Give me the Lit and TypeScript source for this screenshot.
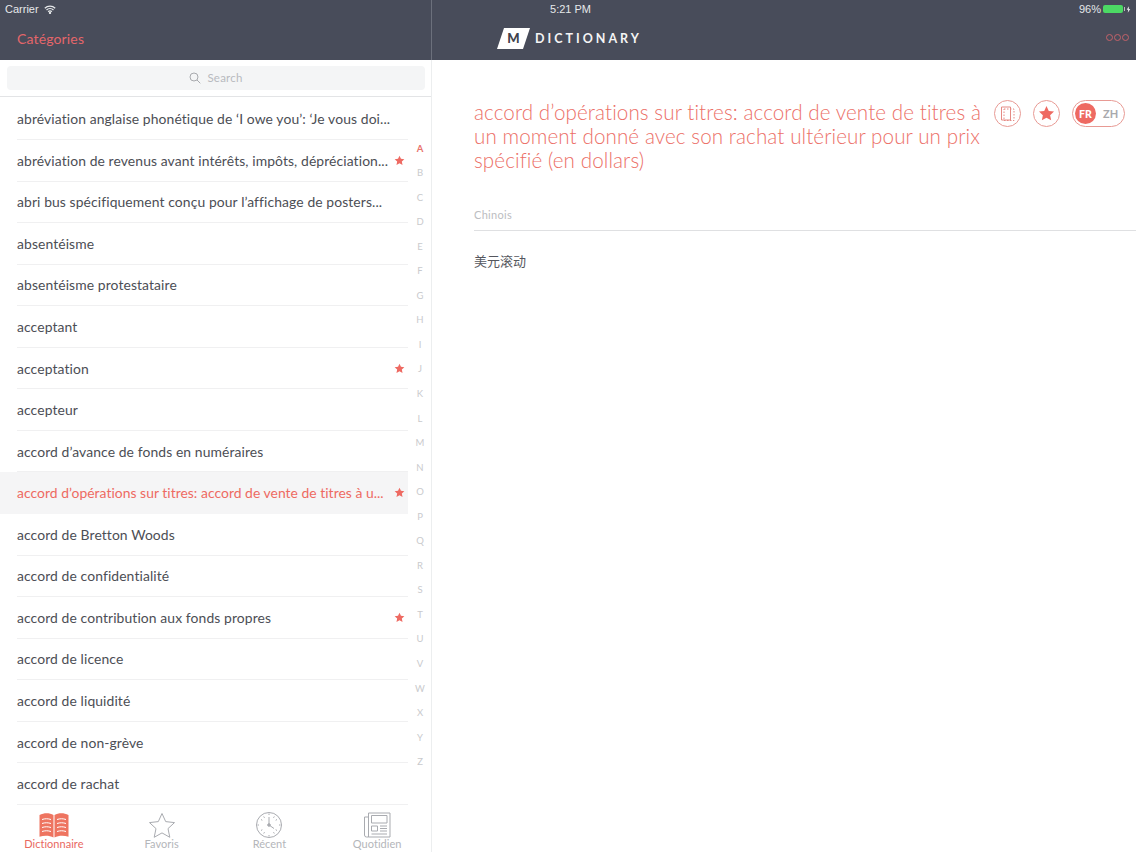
import { LitElement, html, css, svg } from "lit";
import { customElement } from "lit/decorators.js";

const rows: [string, boolean, boolean?][] = [
  ["abréviation anglaise phonétique de ‘I owe you’: ‘Je vous doi...", false],
  ["abréviation de revenus avant intérêts, impôts, dépréciation...", true],
  ["abri bus spécifiquement conçu pour l’affichage de posters...", false],
  ["absentéisme", false],
  ["absentéisme protestataire", false],
  ["acceptant", false],
  ["acceptation", true],
  ["accepteur", false],
  ["accord d’avance de fonds en numéraires", false],
  ["accord d’opérations sur titres: accord de vente de titres à u...", true, true],
  ["accord de Bretton Woods", false],
  ["accord de confidentialité", false],
  ["accord de contribution aux fonds propres", true],
  ["accord de licence", false],
  ["accord de liquidité", false],
  ["accord de non-grève", false],
  ["accord de rachat", false],
];

const star = svg`<path d="M12 1.500l3.200 6.800 7.400.9-5.500 5.100 1.500 7.300-6.600-3.700-6.600 3.700 1.500-7.300L1.400 9.200l7.400-.9z"/>`;

@customElement("app-root")
export class AppRoot extends LitElement {
  static styles = css`
    :host { display: block; width: 1136px; height: 852px; overflow: hidden; background: #fff;
      font-family: Lato, "Noto Sans CJK SC", sans-serif; color: #4a4d57; }
    .app { display: grid; grid-template-columns: 432px 1fr; height: 852px; position: relative; }
    .status { position: absolute; left: 0; right: 0; top: 0; height: 18px; display: grid; grid-template-columns: 1fr auto 1fr;
      align-items: center; color: #e6e8ea; font-size: 11px; padding: 0 5px 0 5px; z-index: 2; font-family: "Liberation Sans", sans-serif; }
    .st-l { display: flex; align-items: center; gap: 5px; }
    .st-r { display: flex; align-items: center; justify-content: flex-end; gap: 2px; }
    .time { font-size: 11px; margin-left: 5px; }
    .batt { width: 20px; height: 8px; background: #4cd964; border-radius: 2px; position: relative; }
    .batt::after { content: ""; position: absolute; right: -2px; top: 2px; width: 1px; height: 4px; background: #bbb; }
    .bolt { margin-left: 1px; }
    .left { display: flex; flex-direction: column; height: 852px; border-right: 1px solid #eceeef; box-sizing: content-box; min-width: 0; }
    .bar { height: 60px; background: #484c5a; flex: none; box-sizing: border-box; }
    .lbar { padding: 30px 0 0 17px; color: #e4666a; font-size: 14px; line-height: 17px; letter-spacing: .15px; border-right: 1px solid #6c707c; margin-right: -1px; }
    .search-wrap { height: 37px; box-sizing: border-box; padding: 6px 6px 6px 7px; border-bottom: 1px solid #e3e4e6; flex: none; }
    .search { height: 24px; background: #f4f5f6; border-radius: 4px; display: flex; align-items: center; justify-content: center; gap: 6px;
      color: #b8babf; font-size: 11.5px; letter-spacing: .2px; }
    .search span { margin-bottom: 1px; }
    .body { flex: 1; display: grid; grid-template-columns: 408px 1fr; min-height: 0; }
    .list { display: flex; flex-direction: column; padding-top: 1.4px; }
    .row { height: 41.57px; box-sizing: border-box; display: flex; align-items: center; margin-left: 17px; border-bottom: 1px solid #f0f0f1;
      font-size: 13.9px; color: #4c4e55; justify-content: space-between; white-space: nowrap; letter-spacing: .1px; }
    .row.sel { margin-left: 0; padding-left: 17px; background: #f5f5f6; color: #ee6a62; border-bottom-color: #f5f5f6; letter-spacing: .03px; }
    .row svg { width: 11px; height: 11px; fill: #ee6a62; margin-right: 3.500px; flex: none; }
    .index { display: flex; flex-direction: column; align-items: center; padding-top: 39.500px; }
    .index span { height: 24.560px; line-height: 24.560px; font-size: 9.500px; color: #c9cacd; width: 24px; text-align: center; }
    .index span.on { color: #e8736d; font-weight: 700; }
    .tabs { height: 47px; flex: none; display: grid; grid-template-columns: repeat(4, 1fr); margin-top: -1px; width: 431px; }
    .tab { display: flex; flex-direction: column; align-items: center; color: #b4b6ba; font-size: 11px; line-height: 12px; padding-top: 7px; letter-spacing: .03px; }
    .tab svg { width: 32px; height: 26px; display: block; }
    .tab.on { color: #e9685f; }
    .right { display: flex; flex-direction: column; min-width: 0; }
    .rbar { display: flex; align-items: flex-start; justify-content: space-between; padding: 28px 7px 0 65px; }
    .logo { display: flex; align-items: center; gap: 5px; color: #f4f4f5; font-weight: 700; font-size: 12.500px; letter-spacing: 3px; line-height: 21px; }
    .mark { width: 33px; height: 21px; position: relative; display: flex; align-items: center; justify-content: center; color: #3f424c; font-size: 13px; letter-spacing: 0; }
    .mark svg { position: absolute; inset: 0; }
    .mark b { position: relative; font-weight: 900; }
    .dots { display: flex; gap: 1px; padding-top: 6px; }
    .dots i { width: 5px; height: 5px; border: 1px solid #c4626a; border-radius: 50%; box-sizing: content-box; display: block; }
    .head { display: flex; padding: 40px 11px 0 42px; justify-content: space-between; align-items: flex-start; }
    .title { width: 515px; color: #ec6f67; font-size: 20.600px; line-height: 24px; letter-spacing: .1px; font-weight: 300; margin: 0; }
    .actions { display: flex; align-items: center; gap: 12px; }
    .circle { width: 27px; height: 27px; border: 1px solid #e89a94; border-radius: 50%; box-sizing: border-box; display: flex; align-items: center; justify-content: center; }
    .toggle { width: 53px; height: 27px; border: 1px solid #e89a94; border-radius: 14px; box-sizing: border-box; display: flex; align-items: center; padding-left: 2px; gap: 7px; font-size: 11px; font-weight: 700; color: #a8a9ad; }
    .toggle b { width: 21px; height: 21px; border-radius: 50%; background: #ee6a62; color: #fff; display: flex; align-items: center; justify-content: center; font-size: 10.500px; }
    .label { margin: 36px 0 0 42px; height: 23px; border-bottom: 1px solid #dfe0e2; color: #bcbdc1; font-size: 11px; line-height: 14px; letter-spacing: .3px; box-sizing: border-box; }
    .zh { margin: 20px 0 0 42px; font-size: 13px; line-height: 20px; color: #55575e; font-family: "Noto Sans CJK SC", sans-serif; font-weight: 400; }
  `;

  render() {
    return html`<div class="app">
      <div class="status">
        <div class="st-l"><span>Carrier</span>
          <svg width="12" height="9" viewBox="0 0 12 9" fill="none" stroke="#e6e8ea" stroke-width="1.300"><path d="M.8 3.200a7.600 7.600 0 0 1 10.400 0M2.500 5a5 5 0 0 1 7 0M4.200 6.700a2.500 2.500 0 0 1 3.600 0"/><circle cx="6" cy="8" r=".5" fill="#e6e8ea"/></svg>
        </div>
        <div class="time">5:21 PM</div>
        <div class="st-r"><span>96%</span><div class="batt"></div>
          <svg class="bolt" width="5" height="9" viewBox="0 0 7 9" fill="#e6e8ea"><path d="M4 0 1 5h2L2.500 9 6 3.800H4z"/></svg>
        </div>
      </div>

      <section class="left">
        <div class="bar lbar">Catégories</div>
        <div class="search-wrap"><div class="search">
          <svg width="12" height="12" viewBox="0 0 12 12" fill="none" stroke="#a8aaae" stroke-width="1"><circle cx="5" cy="5" r="4"/><path d="M8 8l3.300 3.300"/></svg>
          <span>Search</span></div></div>
        <div class="body">
          <div class="list">
            ${rows.map(([t, s, sel]) => html`<div class="row ${sel ? "sel" : ""}"><span>${t}</span>${s ? html`<svg viewBox="0 0 24 24">${star}</svg>` : ""}</div>`)}
          </div>
          <div class="index">
            ${"ABCDEFGHIJKLMNOPQRSTUVWXYZ".split("").map((c) => html`<span class="${c === "A" ? "on" : ""}">${c}</span>`)}
          </div>
        </div>
        <nav class="tabs">
          <div class="tab on">
            <svg viewBox="0 0 32 26"><path fill="#ee7460" d="M1.500 3c4.500-2.500 10-2.500 14 0v22.500c-4-2.200-9.500-2.200-14-.7zM16.500 3c4-2.500 9.500-2.500 14 0v21.800c-4.500-1.500-10-1.500-14 .7z"/><path fill="none" stroke="#fff" stroke-width="1" d="M4 7.500c3-1 6-1 9 0M4 11.500c3-1 6-1 9 0M4 15.500c3-1 6-1 9 0M4 19.500c3-1 6-1 9 0M19 7.500c3-1 6-1 9 0M19 11.500c3-1 6-1 9 0M19 15.500c3-1 6-1 9 0M19 19.500c3-1 6-1 9 0"/></svg>
            Dictionnaire</div>
          <div class="tab">
            <svg viewBox="0 0 32 26"><path fill="none" stroke="#a9abb0" stroke-width="1" d="M16 1.500l3.700 8.100 8.800 1-6.500 6 1.800 8.700-7.800-4.400-7.800 4.400 1.800-8.700-6.500-6 8.800-1z"/></svg>
            Favoris</div>
          <div class="tab">
            <svg viewBox="0 0 32 26" fill="none" stroke="#a9abb0" stroke-width="1"><circle cx="16" cy="13" r="12.500"/><path d="M16 5v8M16 13l5 3.500M16 1.500v1.500M16 23v1.500M4.500 13H6M26 13h1.500M10.700 4.500l.8 1.300M21.300 4.500l-.8 1.300M8 7.500l1.300.8M24 7.500l-1.300.8M8 18.500l1.300-.8M24 18.500l-1.300-.8M10.700 21.500l.8-1.300M21.300 21.500l-.8-1.300"/><circle cx="16" cy="13" r="1.300" fill="#a9abb0"/></svg>
            Récent</div>
          <div class="tab">
            <svg viewBox="0 0 32 26" fill="none" stroke="#a9abb0" stroke-width="1"><path d="M7.500 1h21.500v24H7.500zM7.500 5H3.500v18a2 2 0 0 0 2 2h2"/><path d="M10.500 3.500h15.500v7.500H10.500zM10.500 14h6v5h-6zM19 14h7M19 16.500h7M19 19h7M10.500 22h15.500"/></svg>
            Quotidien</div>
        </nav>
      </section>

      <section class="right">
        <div class="bar rbar">
          <div class="logo">
            <div class="mark"><svg width="33" height="21" viewBox="0 0 33 21"><path fill="#fff" d="M7 0h26l-7 21H0z"/></svg><b>M</b></div>
            <span>DICTIONARY</span>
          </div>
          <div class="dots"><i></i><i></i><i></i></div>
        </div>
        <div class="head">
          <h1 class="title">accord d’opérations sur titres: accord de vente de titres à un moment donné avec son rachat ultérieur pour un prix spécifié (en dollars)</h1>
          <div class="actions">
            <div class="circle"><svg width="17" height="17" viewBox="0 0 17 17" fill="none" stroke="#e58a84" stroke-width="1"><path d="M2.500 2h9v13h-9z"/><path stroke-dasharray="1.500 1.500" d="M5 4h10v11.500H5z"/></svg></div>
            <div class="circle"><svg width="17" height="17" viewBox="0 0 24 24" fill="#ee6a62">${star}</svg></div>
            <div class="toggle"><b>FR</b><span>ZH</span></div>
          </div>
        </div>
        <div class="label">Chinois</div>
        <div class="zh">美元滚动</div>
      </section>
    </div>`;
  }
}
